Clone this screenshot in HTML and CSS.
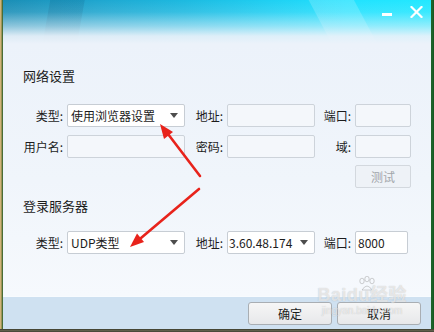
FILE: index.html
```html
<!DOCTYPE html>
<html lang="zh-CN">
<head>
<meta charset="utf-8">
<title>网络设置</title>
<link rel="stylesheet" href="styles.css">
</head>
<body>
<div class="desk">
  <div class="window">
    <div class="titlebar">
      <button class="ctl" aria-label="最小化">
        <svg width="12" height="12" viewBox="0 0 12 12"><rect x="1" y="7" width="10" height="3" fill="#fff"/></svg>
      </button>
      <button class="ctl" aria-label="关闭">
        <svg width="13" height="12" viewBox="0 0 13 12"><path d="M1.5 1 L11.5 11 M11.5 1 L1.5 11" stroke="#fff" stroke-width="2.2" stroke-linecap="square"/></svg>
      </button>
    </div>
    <div class="content">
      <h2 class="sec-title">网络设置</h2>
      <div class="form-grid">
        <label class="lbl">类型:</label>
        <div class="field select"><span class="val">使用浏览器设置</span><i class="caret"></i></div>
        <label class="lbl">地址:</label>
        <div class="field input"></div>
        <label class="lbl">端口:</label>
        <div class="field input"></div>

        <label class="lbl">用户名:</label>
        <div class="field input"></div>
        <label class="lbl">密码:</label>
        <div class="field input"></div>
        <label class="lbl">域:</label>
        <div class="field input"></div>

        <button class="test-btn" disabled>测试</button>
      </div>

      <h2 class="sec-title second">登录服务器</h2>
      <div class="form-grid">
        <label class="lbl">类型:</label>
        <div class="field select"><span class="val">UDP类型</span><i class="caret"></i></div>
        <label class="lbl">地址:</label>
        <div class="field select addr"><span class="val">3.60.48.174</span><i class="caret"></i></div>
        <label class="lbl">端口:</label>
        <div class="field select port"><span class="val">8000</span></div>
      </div>
    </div>
    <div class="footer">
      <button class="btn">确定</button>
      <button class="btn">取消</button>
    </div>
  </div>

  <svg class="arrows" width="434" height="332" viewBox="0 0 434 332">
    <g stroke="#e8231b" stroke-width="2.6" stroke-linecap="round">
      <line x1="200" y1="176" x2="168" y2="134"/>
      <line x1="199" y1="189" x2="141" y2="238"/>
    </g>
    <g fill="#e8231b">
      <polygon points="160,124 173,132 164,139"/>
      <polygon points="130,247 144,242 137,233.5"/>
    </g>
  </svg>

  <div class="watermark">
    <svg class="paw" width="26" height="16" viewBox="0 0 26 16">
      <g fill="none" stroke="rgba(150,150,150,0.45)" stroke-width="1">
        <ellipse cx="7" cy="5" rx="2.2" ry="2.8"/>
        <ellipse cx="12" cy="3" rx="2.2" ry="2.8"/>
        <ellipse cx="17" cy="5" rx="2.2" ry="2.8"/>
        <path d="M7 14 Q12 6 17 14 Z"/>
      </g>
    </svg>
    <div class="wm-main">Baidu经验</div>
    <div class="wm-sub">jingyan.baidu.com</div>
  </div>
</div>
</body>
</html>
```
FILE: styles.css
```css
* { box-sizing: border-box; }

html, body {
  margin: 0;
  padding: 0;
}

body {
  width: 434px;
  height: 332px;
  overflow: hidden;
  font-family: "Noto Sans CJK SC", "Noto Sans", sans-serif;
  color: #1c1c1c;
  background: #1d4a22;
}

.desk {
  position: relative;
  width: 434px;
  height: 332px;
  padding-left: 3px;
  background:
    linear-gradient(to bottom, transparent 0 329px, #3a3a2a 329px, #6b6b55 331px, #2a2a20 332px),
    linear-gradient(to right, #d8c08a 0, #c9a868 1px, #1f5a26 3px, #1f5a26 431px, #1c6b2c 432px, #15501f 434px);
}

.window {
  display: flex;
  flex-direction: column;
  width: 428px;
  height: 329px;
  background:
    linear-gradient(to bottom,
      rgba(236,242,250,0) 0px,
      rgba(236,242,250,0.12) 12px,
      rgba(236,242,250,0.55) 26px,
      rgba(236,242,250,0.93) 36px,
      #ecf2fa 44px) 0 0 / 100% 44px no-repeat,
    linear-gradient(62deg, transparent 0 290px, rgba(255,255,255,0.18) 291px 330px, transparent 331px) 0 0 / 100% 44px no-repeat,
    linear-gradient(100deg, transparent 0 46px, rgba(0,40,80,0.12) 47px 80px, transparent 81px) 0 0 / 100% 44px no-repeat,
    linear-gradient(to right, #1a8db5 0%, #1ea6cf 22%, #1cb9e0 42%, #1ecff2 62%, #20e2ff 80%, #22e8ff 100%) 0 0 / 100% 44px no-repeat,
    linear-gradient(to bottom, #ecf2fa 44px, #f0f5fb 180px, #f6f9fd 296px);
}

.titlebar {
  height: 40px;
  display: flex;
  justify-content: flex-end;
  align-items: flex-start;
  padding: 6px 8px 0 0;
  gap: 16px;
}

.ctl {
  border: 0;
  padding: 0;
  margin: 0;
  background: transparent;
  width: 13px;
  height: 12px;
  display: flex;
}

.content {
  flex: 1;
  padding: 28px 0 0 20px;
}

.sec-title {
  margin: 0;
  font-size: 13px;
  font-weight: normal;
  line-height: 16px;
  height: 16px;
  color: #1c1c1c;
}

.sec-title.second {
  margin-top: 9px;
}

.form-grid {
  display: grid;
  grid-template-columns: 44px 118px 42px 88px 40px 56px;
  grid-auto-rows: 23px;
  row-gap: 8px;
  margin-top: 20px;
}

.sec-title.second + .form-grid {
  margin-top: 17px;
}

.lbl {
  font-size: 12px;
  line-height: 23px;
  text-align: right;
  padding-right: 4px;
  white-space: nowrap;
  color: #1c1c1c;
}

.field {
  height: 23px;
  border: 1px solid #cdd3da;
  border-radius: 2px;
  background: #f4f7fb;
  font-size: 12px;
  line-height: 21px;
  overflow: hidden;
}

.select {
  display: flex;
  align-items: center;
  justify-content: space-between;
  background: #ffffff;
  border-color: #c7cdd4;
  padding: 0 6px 0 3px;
}

.select .val {
  white-space: nowrap;
}

.addr {
  padding-left: 1px;
}

.port {
  width: 53px;
  padding-left: 2px;
}

.caret {
  width: 0;
  height: 0;
  border-left: 4px solid transparent;
  border-right: 4px solid transparent;
  border-top: 5px solid #4d4d4d;
  flex: none;
}

.test-btn {
  grid-column: 6;
  grid-row: 3;
  margin-top: -1px;
  height: 23px;
  border: 1px solid #d3d8de;
  border-radius: 2px;
  background: #eef2f7;
  color: #a2a6ab;
  font-family: inherit;
  font-size: 12px;
  padding: 0;
}

.footer {
  height: 33px;
  flex: none;
  background: #cfe1f1;
  border-top: 1px solid #f8fbfe;
  display: flex;
  justify-content: flex-end;
  align-items: flex-start;
  gap: 5px;
  padding: 5px 10px 0 0;
}

.btn {
  width: 84px;
  height: 23px;
  border: 1px solid #a9aeb3;
  border-radius: 3px;
  background: linear-gradient(to bottom, #f6f6f6, #e7e8ea);
  font-family: inherit;
  font-size: 12px;
  color: #1c1c1c;
  padding: 0;
}

.arrows {
  position: absolute;
  left: 0;
  top: 0;
  pointer-events: none;
}

.watermark {
  position: absolute;
  left: 314px;
  top: 276px;
  width: 96px;
  display: flex;
  flex-direction: column;
  align-items: center;
  pointer-events: none;
  color: rgba(255,255,255,0.6);
  text-shadow: 0 0 1px rgba(120,120,120,0.45);
}

.paw {
  margin-left: 12px;
}

.wm-main {
  margin-top: -6px;
  font-family: "Liberation Sans", "Noto Sans CJK SC", sans-serif;
  font-size: 18px;
  font-weight: bold;
  line-height: 18px;
  letter-spacing: 0.5px;
}

.wm-sub {
  font-family: "Liberation Sans", sans-serif;
  font-size: 10px;
  line-height: 12px;
  margin-top: 1px;
}
```
